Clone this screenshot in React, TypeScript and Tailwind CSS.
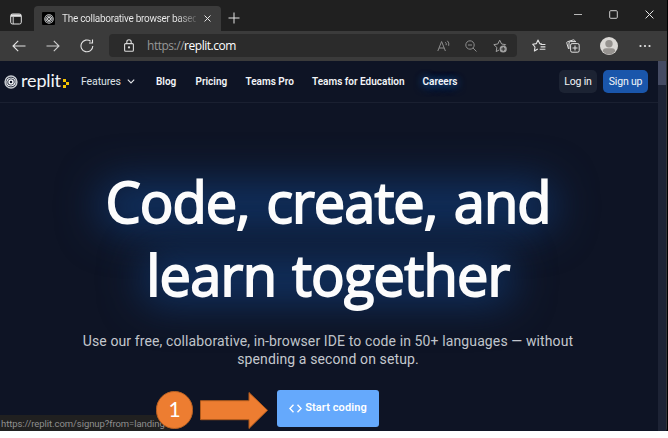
import React from "react";

const navLinks = [
  { label: "Blog", cls: "w-[39.5px]" },
  { label: "Pricing", cls: "w-[50px]" },
  { label: "Teams Pro", cls: "w-[66.5px]" },
  { label: "Teams for Education", cls: "w-[110.5px]" },
];

function Spiral({ className }: { className: string }) {
  return (
    <svg viewBox="0 0 14 14" className={className} fill="none" stroke="#f5f7fa" strokeLinecap="round">
      <circle cx="7" cy="7" r="5.9" strokeWidth="1.5" opacity=".8" />
      <circle cx="7" cy="7" r="2" strokeWidth="1.5" />
      <path d="M3 8.4C2.2 5.4 4.2 3 7 3c1.9 0 3.3.8 4 2.3M11 5.6c.8 3-1.2 5.4-4 5.4-1.9 0-3.3-.8-4-2.3" strokeWidth="1.1" />
    </svg>
  );
}

function TitleBar() {
  return (
    <div className="flex h-[31px] shrink-0 items-end bg-[#202020]">
      <div className="flex h-[25px] w-[34px] items-center pl-[10px]">
        <svg viewBox="0 0 12 12" className="size-3" fill="none" stroke="#e4e4e4">
          <rect x="0.7" y="1" width="10.6" height="10" rx="1.8" strokeWidth="1" />
          <path d="M1 2.6h10" strokeWidth="2.4" />
          <path d="M3.2 4v7" strokeWidth="0.9" />
        </svg>
      </div>
      <div className="flex h-[25px] w-[187px] items-center rounded-t-[4px] bg-[#3b3b3b] pl-[8px]">
        <div className="flex size-[13px] items-center justify-center rounded-[1px] bg-black">
          <Spiral className="size-[10px]" />
        </div>
        <div className="ml-[7px] w-[134px] bg-linear-to-r from-[#f0f0f0] from-85% to-[#5b5b5b] bg-clip-text whitespace-nowrap text-[10px] leading-[15px] tracking-[-0.28px] text-transparent">
          The collaborative browser based
        </div>
        <svg viewBox="0 0 8 8" className="ml-[8px] size-[7px]" stroke="#ececec" strokeWidth="1.1">
          <path d="M.6.6l6.8 6.8M7.4.6L.6 7.4" />
        </svg>
      </div>
      <div className="flex h-[25px] w-[26px] items-center justify-center pb-[2px]">
        <svg viewBox="0 0 12 12" className="size-[12px]" stroke="#e4e4e4" strokeWidth="1">
          <path d="M6 .5v11M.5 6h11" />
        </svg>
      </div>
      <div className="mr-[13px] ml-auto flex h-[33px] items-center gap-[27px]">
        <svg viewBox="0 0 8 8" className="size-[8px]" stroke="#b8b8b8" fill="none"><path d="M0 3.5h8" /></svg>
        <svg viewBox="0 0 9 9" className="size-[9px]" stroke="#cfcfcf" fill="none"><rect x=".7" y=".7" width="7.6" height="7.6" rx="1" /></svg>
        <svg viewBox="0 0 9 9" className="size-[9px]" stroke="#e8e8e8" fill="none"><path d="M.6.6l7.8 7.8M8.4.6L.6 8.4" /></svg>
      </div>
    </div>
  );
}

function Toolbar() {
  return (
    <div className="flex h-[30px] shrink-0 items-center bg-[#3b3b3b] pb-px pl-[12px]">
      <svg viewBox="0 0 14 12" className="h-3 w-[14px]" fill="none" stroke="#e4e4e4" strokeWidth="1.1">
        <path d="M13.5 6H1M6.2.8L1 6l5.2 5.2" />
      </svg>
      <svg viewBox="0 0 14 12" className="ml-[20px] h-3 w-[14px]" fill="none" stroke="#cfcfcf" strokeWidth="1.1">
        <path d="M.5 6H13M7.8.8L13 6l-5.2 5.2" />
      </svg>
      <svg viewBox="0 0 14 14" className="ml-[20px] size-[14px]" fill="none" stroke="#e4e4e4" strokeWidth="1.1">
        <path d="M12.8 7A5.9 5.9 0 1 1 10.6 2.3M12.5.6V4H9" />
      </svg>
      <div className="ml-[15px] flex h-[23px] w-[408px] items-center rounded-[4px] bg-[#2b2b2b] pl-[15px]">
        <svg viewBox="0 0 10 13" className="h-[13px] w-[10px]" fill="none" stroke="#dadada" strokeWidth="1.1">
          <rect x=".6" y="4.6" width="8.8" height="7.6" rx="1" />
          <path d="M2.8 4.5V3a2.2 2.2 0 0 1 4.4 0v1.5" />
          <circle cx="5" cy="8.4" r=".6" fill="#dadada" />
        </svg>
        <div className="ml-[13px] w-[90px] whitespace-nowrap text-[12px] leading-[16px] tracking-[-0.48px] text-white font-['Open_Sans']">
          <span className="text-[#979797]">https://</span>replit.com
        </div>
        <svg viewBox="0 0 13 12" className="ml-auto h-[12px] w-[13px]" fill="none" stroke="#8d8d8d">
          <path d="M.8 11L4.6 1.5 8.4 11M2.1 8h5M8.3 2.2q1.4 1 .9 3M10.4.8q2.1 2.1 1.3 5" />
        </svg>
        <svg viewBox="0 0 12 12" className="ml-[15px] size-[12px]" fill="none" stroke="#8d8d8d">
          <circle cx="5" cy="5" r="4.2" /><path d="M8 8l3.5 3.5M3 5h4" />
        </svg>
        <svg viewBox="0 0 14 14" className="mr-[10px] ml-[16px] size-[14px]" fill="none" stroke="#a0a0a0">
          <path d="M6 11L3.2 12.6l.7-4.1L.8 5.6l4-.6L6.7 1.2 8.6 5l4 .6-1 1" strokeLinejoin="round" />
          <circle cx="10.2" cy="10" r="3.6" fill="#a0a0a0" stroke="none" />
          <path d="M10.2 8v4M8.2 10h4" stroke="#2b2b2b" />
        </svg>
      </div>
      <svg viewBox="0 0 14 13" className="ml-[15px] h-[13px] w-[14px]" fill="none" stroke="#e2e2e2" strokeWidth="1.1">
        <path d="M5.8 10.1L2.4 12l.6-4L.7 5.2l3.7-.6L6 1.1l1.7 3.5 2.2.5M8.6 5.5h4.8M8.6 7.9h4.8M7.7 10.3h5.7" strokeLinejoin="round" />
      </svg>
      <svg viewBox="0 0 14 14" className="ml-[20px] size-[14px]" fill="none" stroke="#e2e2e2">
        <path d="M2.5 9.8L.8 4.2c-.2-.7 0-1.3.8-1.5L7.3.9c.7-.2 1.2.1 1.5.8" />
        <path d="M3 10V4q0-1.4 1.4-1.4H10" />
        <rect x="4.6" y="4.6" width="8.6" height="8.6" rx="1.5" /><path d="M9 6.5v5M6.5 9h5" />
      </svg>
      <svg viewBox="0 0 18 18" className="ml-[20px] size-[18px]">
        <circle cx="9" cy="9" r="9" fill="#dad8d5" />
        <circle cx="9" cy="6.8" r="3.7" fill="#969390" />
        <path d="M2.8 14.5Q3 11.2 6 11.2h6q3 0 3.2 3.3Q12.7 17.4 9 17.4t-6.2-2.9" fill="#969390" />
      </svg>
      <svg viewBox="0 0 12 4" className="ml-[21px] h-1 w-3" fill="#e8e8e8">
        <circle cx="1.5" cy="2" r="1.1" /><circle cx="6" cy="2" r="1.1" /><circle cx="10.5" cy="2" r="1.1" />
      </svg>
    </div>
  );
}

function SiteNav() {
  return (
    <nav className="flex h-[42px] items-center border-b border-[#1a2031] pl-[4px] text-[10px] leading-[14px] font-semibold text-[#f3f5f8]">
      <Spiral className="size-[14px] shrink-0" />
      <div className="ml-[3px] h-[25px] w-[41px] whitespace-nowrap font-['Lato'] text-[18px] leading-[23px] font-normal tracking-[-0.15px]">replit</div>
      <svg viewBox="0 0 6 9" className="mt-[3px] ml-[1px] h-[9px] w-[6px] shrink-0" fill="#f5c400">
        <path d="M0 0h3v3H0zM3 3h3v3H3zM0 6h3v3H0z" />
      </svg>
      <div className="ml-[12px] w-[46px] text-[10.5px] font-normal tracking-[-0.1px] text-[#dfe2e7]">Features</div>
      <svg viewBox="0 0 8 5" className="mr-[21px] h-[5px] w-[8px] shrink-0" fill="none" stroke="#e4e6ea" strokeWidth="1.1">
        <path d="M.8.7L4 4 7.2.7" />
      </svg>
      {navLinks.map((l) => (
        <div key={l.label} className={`shrink-0 whitespace-nowrap ${l.cls}`}>{l.label}</div>
      ))}
      <div className="[text-shadow:0_0_7px_#164d91,0_2px_10px_#164d91]">Careers</div>
      <button className="mr-[6px] ml-auto h-[23px] w-[38px] rounded-[5px] bg-[#1c2333] text-[10.5px] font-normal tracking-[-0.2px] whitespace-nowrap">Log in</button>
      <button className="mr-[10px] h-[23px] w-[45px] rounded-[5px] bg-[#1a56ab] text-[10.5px] font-normal tracking-[-0.2px] whitespace-nowrap">Sign up</button>
    </nav>
  );
}

function Hero() {
  return (
    <section className="flex flex-col items-center pt-[62px] pr-[2px]">
      <h1 className="relative text-center font-['Open_Sans'] text-[56px] leading-[73px] whitespace-nowrap text-[#fcfcfc] [-webkit-text-stroke:1.8px_#fcfcfc]">
        <span className="absolute top-[16px] -left-[6px] h-[50px] w-[456px] rounded-[20px] bg-[#10305f] blur-[20px]" />
        <span className="absolute top-[89px] left-[36px] h-[50px] w-[372px] rounded-[20px] bg-[#10305f] blur-[20px]" />
        <span className="relative block tracking-[-1px] [word-spacing:3px]">Code, create, and</span>
        <span className="relative block tracking-[-0.8px] [word-spacing:2px]">learn together</span>
      </h1>
      <p className="mt-[21px] text-center text-[14px] leading-[18px] tracking-[0.115px] whitespace-nowrap text-[#c4c8ce]">
        <span className="block">Use our free, collaborative, in-browser IDE to code in 50+ languages — without</span>
        <span className="block">spending a second on setup.</span>
      </p>
      <button className="mt-[22px] flex h-[37px] w-[102px] items-center justify-center gap-[3px] rounded-[3px] bg-[#65a9fc] text-[11px] font-semibold tracking-[0.1px] whitespace-nowrap text-white">
        <svg viewBox="0 0 13 9" className="h-[9px] w-[13px]" fill="none" stroke="white" strokeWidth="1.4">
          <path d="M4.5.7L.9 4.5l3.6 3.8M8.5.7l3.6 3.8-3.6 3.8" />
        </svg>
        Start coding
      </button>
    </section>
  );
}

export default function App() {
  return (
    <div className="h-[438px] w-[668px] overflow-hidden bg-white font-['Roboto','Noto_Sans',sans-serif]">
      <div className="relative flex h-[431px] w-[668px] flex-col overflow-hidden border-r border-black bg-[#0e1425]">
        <TitleBar />
        <Toolbar />
        <div className="flex min-h-0 flex-1">
          <main className="w-[658px] shrink-0 overflow-hidden"><SiteNav /><Hero /></main>
          <div className="flex-1 rounded-br-[3px] border-r border-[#33353b] bg-[#1d2335]"><div className="h-[24px] bg-[#454b63]" /></div>
        </div>
        <div className="absolute bottom-0 left-0 h-[16px] w-[170px] bg-[#202020] pl-[1px] text-[9.5px] leading-[17px] tracking-[-0.07px] whitespace-nowrap text-[#8f8f8f]">
          https://replit.com/signup?from=landing
        </div>
        <div className="absolute top-[391px] left-[156px] flex h-[38px] w-[37px] items-center justify-center rounded-full border border-[#b96122] bg-[#ed7d31] pb-[3px] font-['Lato'] text-[21px] leading-none text-white">1</div>
        <svg viewBox="0 0 69 39" className="absolute top-[391px] left-[200px] h-[39px] w-[69px]" fill="#ed7d31" stroke="#b05a1c">
          <path d="M.5 9.7h48.5V1.5L67.5 19.3 49 37.5v-8.8H.5z" />
        </svg>
      </div>
    </div>
  );
}
